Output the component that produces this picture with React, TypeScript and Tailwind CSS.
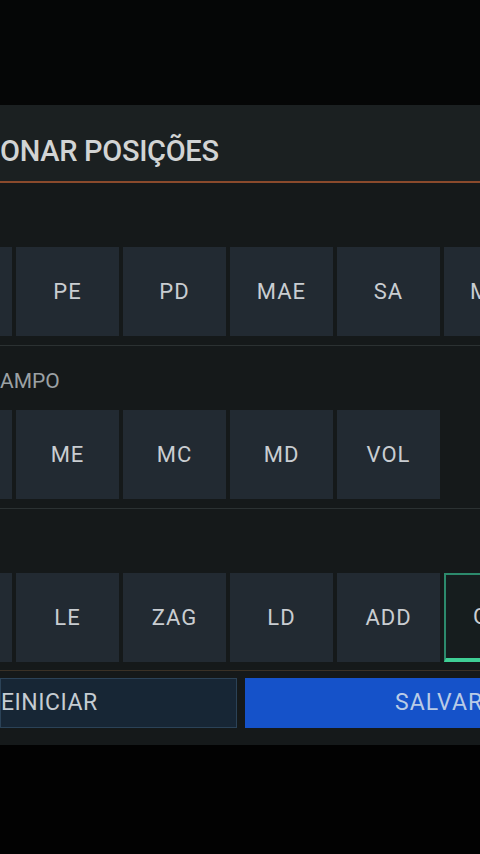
import React from "react";

// rows of position tiles; first tile of each row sits mostly off-screen to the left
const SECTIONS: { label?: string; tiles: string[]; selected?: string }[] = [
  { tiles: ["ATA", "PE", "PD", "MAE", "SA", "MAD"] },
  { label: "AMPO", tiles: ["MEI", "ME", "MC", "MD", "VOL"] },
  { tiles: ["ADE", "LE", "ZAG", "LD", "ADD", "GOL"], selected: "GOL" },
];

const font = { fontFamily: "Roboto, 'Liberation Sans', sans-serif" };

const Tile: React.FC<{ label: string; selected?: boolean }> = ({ label, selected }) => (
  <div
    className={
      selected
        ? "w-[103px] h-[89px] shrink-0 flex items-center justify-center bg-[#161d1e] border-2 border-[#2c8a6c] border-b-4 border-b-[#3fcf95]"
        : "w-[103px] h-[89px] shrink-0 flex items-center justify-center bg-[#222a32]"
    }
  >
    <span className="text-[22px] tracking-[1px] text-[#c9cdd1]">{label}</span>
  </div>
);

export default function App() {
  return (
    <div className="w-[480px] h-[854px] bg-black overflow-hidden flex flex-col" style={font}>
      <div className="h-[105px] shrink-0 bg-[#050606]" />

      <div className="flex flex-col bg-[#15191a] overflow-hidden">
        {/* title bar */}
        <div className="h-[78px] bg-[#1b2021] border-b-2 border-[#8a4a2c] flex items-start pt-[29px]">
          <span className="text-[29px] leading-[34px] tracking-[-0.3px] font-medium text-[#d2d4d4] whitespace-nowrap">
            ONAR POSIÇÕES
          </span>
        </div>

        {SECTIONS.map((s, i) => (
          <div
            key={i}
            className={
              i < SECTIONS.length - 1
                ? "pt-[20px] pb-[9px] border-b border-[#2b3132]"
                : "pt-[20px] pb-[8px] border-b border-[#3a3126]"
            }
          >
            <div className="h-[30px] text-[21px] leading-[30px] text-[#9ba1a4] whitespace-nowrap">
              {s.label ?? ""}
            </div>
            <div className="mt-[14px] flex gap-[4px] ml-[-91px]">
              {s.tiles.map((t) => (
                <Tile key={t} label={t} selected={t === s.selected} />
              ))}
            </div>
          </div>
        ))}

        {/* bottom buttons */}
        <div className="pt-[7px] pb-[17px] flex gap-[8px]">
          <div className="w-[237px] h-[50px] shrink-0 bg-[#172635] border border-[#2b4257] flex items-center">
            <span className="text-[23px] tracking-[0.5px] text-[#c5ccd2] whitespace-nowrap">EINICIAR</span>
          </div>
          <div className="flex-1 h-[50px] bg-[#1552c9] flex items-center pl-[150px] overflow-hidden">
            <span className="text-[23px] tracking-[1px] text-[#b9cbe6] whitespace-nowrap">SALVAR</span>
          </div>
        </div>
      </div>

      <div className="flex-1 bg-[#020202]" />
    </div>
  );
}
